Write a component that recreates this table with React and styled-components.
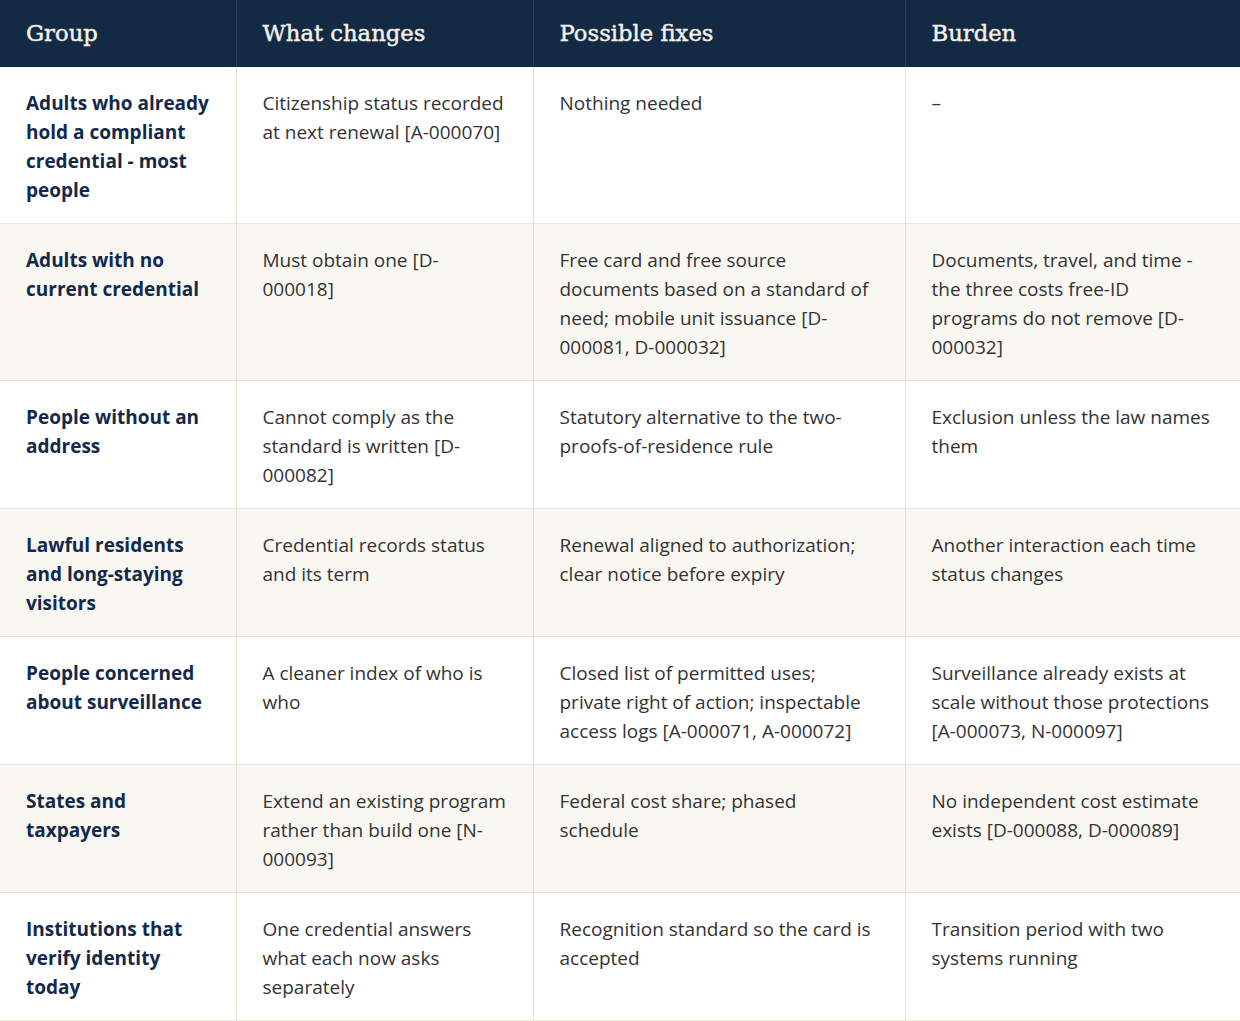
import React from "react";
import styled, { createGlobalStyle } from "styled-components";

const Global = createGlobalStyle`
  html, body { margin: 0; padding: 0; background: #ffffff; }
  body { font-family: "Open Sans", "Noto Sans", sans-serif; }
`;

const Table = styled.table`
  width: 1240px;
  border-collapse: collapse;
  table-layout: fixed;
`;

const HeadCell = styled.th`
  background: #132a45;
  color: #f6f1e7;
  font-family: "DejaVu Serif", "Liberation Serif", serif;
  font-weight: 400;
  -webkit-text-stroke: 0.45px #f6f1e7;
  font-size: 22.7px;
  line-height: 27px;
  text-align: left;
  padding: 20px 26px 20px;
  border-left: 1px solid #2c415c;
  &:first-child { border-left: none; }
`;

const Row = styled.tr`
  background: ${(p) => (p.$alt ? "#f9f7f2" : "#ffffff")};
  border-bottom: 1px solid #ece5d8;
`;

const Cell = styled.td`
  vertical-align: top;
  padding: 22px 26px 18px;
  font-size: 19px;
  line-height: 29px;
  color: ${(p) => (p.$group ? "#13294b" : "#333333")};
  font-weight: ${(p) => (p.$group ? 700 : 400)};
  border-left: 1px solid #e8e0d2;
  &:first-child { border-left: none; }
`;

const rows = [
  ["Adults who already hold a compliant credential - most people", "Citizenship status recorded at next renewal [A-000070]", "Nothing needed", "–"],
  ["Adults with no current credential", "Must obtain one [D-000018]", "Free card and free source documents based on a standard of need; mobile unit issuance [D-000081, D-000032]", "Documents, travel, and time - the three costs free-ID programs do not remove [D-000032]"],
  ["People without an address", "Cannot comply as the standard is written [D-000082]", "Statutory alternative to the two-proofs-of-residence rule", "Exclusion unless the law names them"],
  ["Lawful residents and long-staying visitors", "Credential records status and its term", "Renewal aligned to authorization; clear notice before expiry", "Another interaction each time status changes"],
  ["People concerned about surveillance", "A cleaner index of who is who", "Closed list of permitted uses; private right of action; inspectable access logs [A-000071, A-000072]", "Surveillance already exists at scale without those protections [A-000073, N-000097]"],
  ["States and taxpayers", "Extend an existing program rather than build one [N-000093]", "Federal cost share; phased schedule", "No independent cost estimate exists [D-000088, D-000089]"],
  ["Institutions that verify identity today", "One credential answers what each now asks separately", "Recognition standard so the card is accepted", "Transition period with two systems running"],
];

export default function App() {
  return (
    <>
      <Global />
      <Table>
        <colgroup>
          <col style={{ width: 236 }} />
          <col style={{ width: 297 }} />
          <col style={{ width: 372 }} />
          <col style={{ width: 335 }} />
        </colgroup>
        <thead>
          <tr>
            <HeadCell>Group</HeadCell>
            <HeadCell>What changes</HeadCell>
            <HeadCell>Possible fixes</HeadCell>
            <HeadCell>Burden</HeadCell>
          </tr>
        </thead>
        <tbody>
          {rows.map((r, i) => (
            <Row key={i} $alt={i % 2 === 1}>
              <Cell $group>{r[0]}</Cell>
              <Cell>{r[1]}</Cell>
              <Cell>{r[2]}</Cell>
              <Cell>{r[3]}</Cell>
            </Row>
          ))}
        </tbody>
      </Table>
    </>
  );
}
